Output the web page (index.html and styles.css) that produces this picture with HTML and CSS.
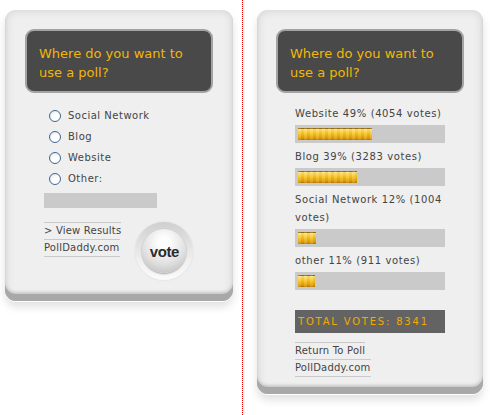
FILE: index.html
```html
<!DOCTYPE html>
<html lang="en">

<head>
  <meta charset="UTF-8">
  <title>PollDaddy Poll</title>
  <link rel="stylesheet" href="styles.css">
</head>

<body>

  <div class="page">

    <div class="poll poll-vote">
      <div class="question">Where do you want to use a poll?</div>

      <ul class="options">
        <li><span class="radio"></span>Social Network</li>
        <li><span class="radio"></span>Blog</li>
        <li><span class="radio"></span>Website</li>
        <li><span class="radio"></span>Other:</li>
      </ul>
      <div class="other-input"></div>

      <div class="vote-footer">
        <div class="links">
          <a href="#">&gt; View Results</a>
          <a href="#">PollDaddy.com</a>
        </div>
        <div class="vote-ring">
          <button class="vote-btn">vote</button>
        </div>
      </div>
    </div>

    <div class="divider"></div>

    <div class="poll poll-results">
      <div class="question">Where do you want to use a poll?</div>

      <div class="results">
        <div class="result">
          <div class="label">Website 49% (4054 votes)</div>
          <div class="bar"><div class="fill" style="width: 74px"></div></div>
        </div>
        <div class="result">
          <div class="label">Blog 39% (3283 votes)</div>
          <div class="bar"><div class="fill" style="width: 59px"></div></div>
        </div>
        <div class="result">
          <div class="label">Social Network 12% (1004 votes)</div>
          <div class="bar"><div class="fill" style="width: 18px"></div></div>
        </div>
        <div class="result">
          <div class="label">other 11% (911 votes)</div>
          <div class="bar"><div class="fill" style="width: 17px"></div></div>
        </div>

        <div class="total">TOTAL VOTES: 8341</div>

        <div class="links">
          <a href="#">Return To Poll</a>
          <a href="#">PollDaddy.com</a>
        </div>
      </div>
    </div>

  </div>

</body>

</html>
```

FILE: styles.css
```css
body {
  margin: 0;
  background: #fff;
  font-family: 'DejaVu Sans', Verdana, sans-serif;
  color: #444;
}

.page {
  display: flex;
  align-items: flex-start;
  height: 415px;
  padding-left: 5px;
}

.poll {
  width: 228px;
  margin-top: 10px;
  background: #efefef;
  border-radius: 11px;
  box-shadow:
    inset 0 -7px 0 #a8a8a8,
    inset 0 -9px 3px #c8c8c8,
    inset 0 0 7px 2px #d9d9d9,
    0 1px 0 #fff,
    0 6px 8px rgba(0, 0, 0, 0.12);
}

.poll-vote {
  height: 291px;
}

.poll-results {
  width: 226px;
  height: 384px;
  margin-left: 14px;
}

.divider {
  align-self: stretch;
  margin-left: 9px;
  border-left: 1px dotted #f00;
}

.question {
  width: 188px;
  height: 64px;
  box-sizing: border-box;
  margin: 19px 0 0 20px;
  padding: 13px 10px 0 12px;
  background: #494949;
  border: 2px solid #a3a3a3;
  border-radius: 9px;
  color: #f2b705;
  font-size: 13px;
  line-height: 19px;
}

.poll-results .question {
  margin-left: 19px;
}

/* vote form */
.options {
  list-style: none;
  margin: 12px 0 0 44px;
  padding: 0;
}

.options li {
  display: flex;
  align-items: center;
  height: 21px;
  font-size: 10px;
  letter-spacing: 0.5px;
}

.radio {
  width: 10px;
  height: 10px;
  margin-right: 7px;
  border: 1.5px solid #3f6890;
  border-radius: 50%;
  background: radial-gradient(circle at 60% 65%, #fff 40%, #d6dde6);
}

.other-input {
  width: 113px;
  height: 15px;
  margin: 4px 0 0 39px;
  background: #cacaca;
}

.vote-footer {
  display: flex;
  margin: 14px 0 0 39px;
}

.links {
  display: flex;
  flex-direction: column;
  align-items: flex-start;
}

.links a {
  display: inline-block;
  border-top: 1px solid #c9c9c9;
  color: #444;
  font-size: 10px;
  letter-spacing: 0.2px;
  line-height: 16px;
  text-decoration: none;
}

.links a:last-child {
  border-bottom: 1px solid #c9c9c9;
}

.vote-ring {
  display: flex;
  align-items: center;
  justify-content: center;
  width: 58px;
  height: 58px;
  margin: 0 0 0 14px;
  border-radius: 50%;
  background: linear-gradient(#cfcfcf, #efefef 65%, #fbfbfb);
  box-shadow: 0 0 2px rgba(0, 0, 0, 0.12);
}

.vote-btn {
  width: 44px;
  height: 44px;
  padding: 0;
  border: none;
  border-radius: 50%;
  background: radial-gradient(circle at 50% 30%, #fdfdfd 15%, #e2e2e2 55%, #b5b5b5);
  box-shadow: 0 1px 2px rgba(0, 0, 0, 0.35);
  color: #2b2b2b;
  font-family: 'Liberation Sans', Arial, sans-serif;
  font-size: 15px;
  font-weight: bold;
  letter-spacing: -0.4px;
}

/* results */
.results {
  width: 150px;
  margin: 12px 0 0 38px;
}

.result {
  margin-bottom: 5px;
}

.label {
  font-size: 10px;
  letter-spacing: 0.6px;
  line-height: 18px;
  margin-bottom: 2px;
}

.bar {
  height: 18px;
  box-sizing: border-box;
  padding: 3px;
  background: #cacaca;
}

.fill {
  height: 12px;
  background:
    repeating-linear-gradient(90deg, rgba(255, 255, 255, 0.12) 0 3px, rgba(0, 0, 0, 0.03) 3px 6px),
    linear-gradient(#9a6a10 0 1px, #ffe27a 1px, #f7c523 45%, #e39b00 85%, #b57700);
}

.total {
  height: 23px;
  margin-top: 20px;
  padding-left: 3px;
  background: #636363;
  color: #f5a800;
  font-size: 10px;
  letter-spacing: 1.8px;
  line-height: 23px;
}

.results .links {
  margin-top: 9px;
}
```
